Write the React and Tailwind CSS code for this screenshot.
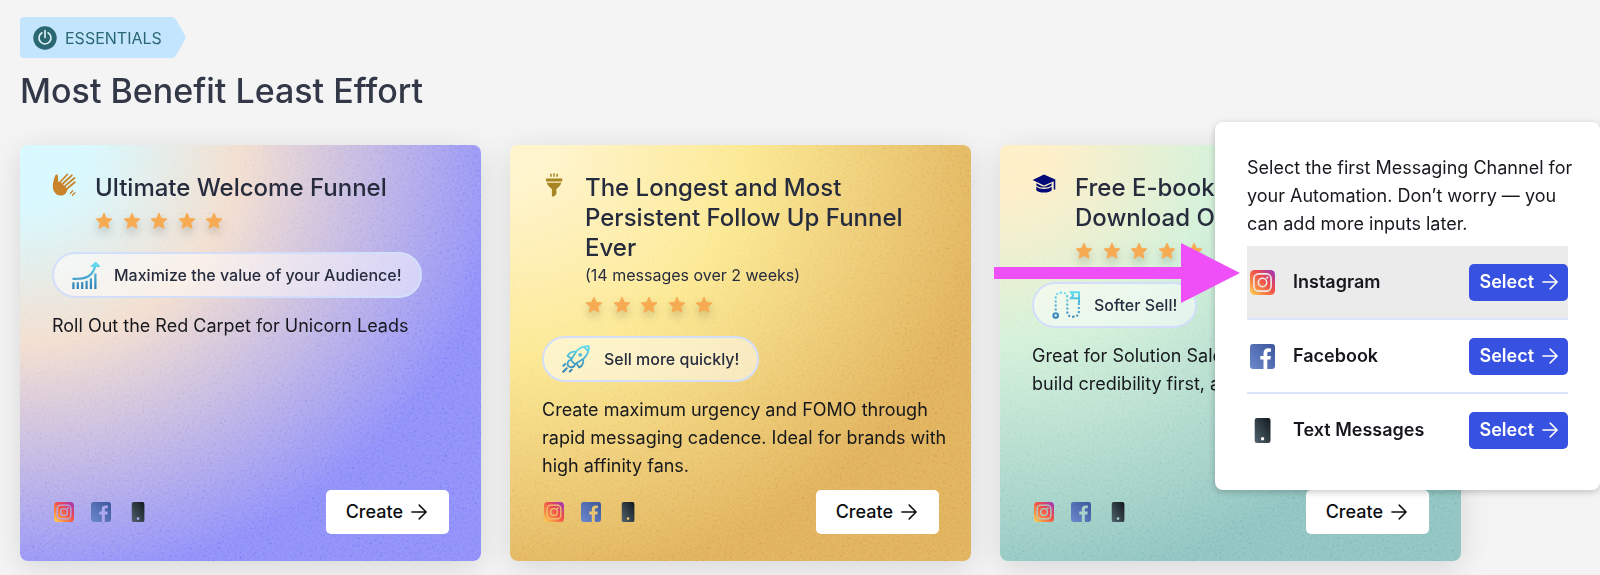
import { useId } from 'react';

function ArrowIcon({ className }) {
  return (
    <svg viewBox="0 0 16 16" fill="none" stroke="currentColor" strokeWidth="1.5" strokeLinecap="round" strokeLinejoin="round" className={className} aria-hidden="true">
      <path d="M0.9 8H15M8.2 1.1L15.1 8L8.2 14.9" />
    </svg>
  );
}

function PowerIcon() {
  return (
    <svg viewBox="0 0 24 24" className="size-6" aria-hidden="true">
      <circle cx="12" cy="12" r="11.7" fill="#2b6770" />
      <path d="M9 6.8a6 6 0 1 0 6 0M12 4.6v7" fill="none" stroke="#e3f5fb" strokeWidth="1.6" strokeLinecap="round" />
    </svg>
  );
}

function WaveIcon() {
  return (
    <svg viewBox="0 0 24 24" className="size-6" aria-hidden="true" fill="none" stroke="#c9832a" strokeLinecap="round">
      <path d="M0.8 13.6C0.6 9.5 2.4 5 3.4 2.3C4.1 0.9 6 1.4 5.9 3L6.3 8.8L9.5 10L15.5 16C15 19.6 12.8 22.8 8.5 22.6C4 22.5 1 18.6 0.8 13.6Z" fill="#c9832a" stroke="none" />
      <path d="M7.2 10L15.3 1.5M9.4 12L19.8 2.3M11.5 14.4L22.5 5M13.7 16.8L22.8 9.3" strokeWidth="1.8" />
      <path d="M18.4 20.3L20.7 17.8M20.4 22.3L23 19.6" strokeWidth="1.3" />
    </svg>
  );
}

function FunnelIcon() {
  return (
    <svg viewBox="0 0 24 24" className="size-6" aria-hidden="true" fill="#a88423">
      <path d="M8.2 0.8h1.5v3h-1.5zM11.3 0.3h1.5v3.5h-1.5zM14.4 0.8h1.5v3h-1.5zM4 5.6h16.2v2.8H4zM4.8 9.8h14.6c-0.7 2.6-2.6 4.3-5 6.2v5.2l-2.7 2.3H9.9V16C7.3 14.1 5.4 12.3 4.8 9.8z" />
    </svg>
  );
}

function CapIcon() {
  return (
    <svg viewBox="0 0 24 24" className="size-6" aria-hidden="true" fill="#030a78">
      <path d="M12 1.4L23.3 6.4V16.5H21.7V8.3L12 12.5L0.6 7Z" />
      <path d="M4.3 10.2L9.7 12.9Q12 14 14.3 12.9L19.7 10.2V12.2Q17.8 14.5 12 14.6Q6.2 14.5 4.3 12.2ZM4.3 13.8Q7 16 12 16T19.7 13.8V17.2Q17.7 19.5 12 19.5T4.3 17.2Z" />
    </svg>
  );
}

function Star() {
  return (
    <svg viewBox="0 0 18 18" className="size-[18px]" aria-hidden="true">
      <path d="M9 1.1L11.35 6.3L17 6.95L12.8 10.8L13.95 16.4L9 13.6L4.05 16.4L5.2 10.8L1 6.95L6.65 6.3Z" fill="#f6aa52" stroke="#f6aa52" strokeWidth="0.9" strokeLinejoin="round" />
    </svg>
  );
}

function BlueFade({ id }) {
  return (
    <linearGradient id={id} gradientUnits="userSpaceOnUse" x1="0" y1="0" x2="0" y2="28">
      <stop offset="0" stopColor="#62e0f2" />
      <stop offset="1" stopColor="#2f7cb4" />
    </linearGradient>
  );
}

function GrowthIcon() {
  const id = useId();
  return (
    <svg viewBox="0 0 28 28" className="size-7" aria-hidden="true" fill="none" stroke={`url(#${id})`}>
      <defs><BlueFade id={id} /></defs>
      <path d="M0.5 17.9L7 17.7C14 17.5 21.5 15 23.7 3" strokeWidth="2.1" />
      <path d="M19.6 5.2L23.8 1.4L27.5 5.4Z" fill="#62e0f2" strokeWidth="1.2" />
      <path d="M1.4 28V21.3M5.8 28V21.3M10.2 28V21M14.6 28V19.7M18.9 28V17.3M23.4 28V12.5" strokeWidth="2.2" />
    </svg>
  );
}

function RocketIcon() {
  const id = useId();
  return (
    <svg viewBox="0 0 28 28" className="size-7" aria-hidden="true" fill="none" stroke={`url(#${id})`} strokeWidth="1.8" strokeLinejoin="round" strokeLinecap="round">
      <defs><BlueFade id={id} /></defs>
      <path d="M26.9 1.1C21.5 1 17.5 2.8 14.5 6L8.8 15.2L12.8 19.2L21.8 13.5C25.3 10.3 27 6.5 26.9 1.1Z" />
      <path d="M22 1.9L26.1 6M14 6.8C9.5 6 7.2 7.9 5.5 11L9.6 13.5M21.1 14.1C22 18.5 20.4 20.7 17.2 22.5L14.5 18.6M8.8 15.2C6.5 14.9 5.3 17 5.7 20.4L8 22.1C11 22.4 13 21.5 12.8 19.2" />
      <circle cx="18.2" cy="9.8" r="1" />
      <path d="M3.3 18.9L1.4 20.8M4.7 23.3L1.3 26.7M9.7 24.6L7.8 26.5" strokeWidth="2" />
    </svg>
  );
}

function RouteIcon() {
  const id = useId();
  return (
    <svg viewBox="0 0 28 28" className="size-7" aria-hidden="true" fill="none" stroke={`url(#${id})`}>
      <defs><BlueFade id={id} /></defs>
      <circle cx="3.7" cy="24.5" r="2.3" strokeWidth="2" />
      <path d="M3.7 19.5V6.5Q3.7 1.5 9.5 1.5Q15.3 1.5 15.3 6.5V20.5Q15.3 25.7 21 25.7Q26.8 25.7 26.8 20.5V12" strokeWidth="2" strokeDasharray="2 2" />
      <path d="M27 12V1.3H19L21.3 4.3L19 7.3H27" strokeWidth="2" />
    </svg>
  );
}

function InstagramIcon({ className }) {
  const id = useId();
  return (
    <svg viewBox="0 0 25 25" className={className} role="img" aria-label="Instagram">
      <defs>
        <linearGradient id={`${id}a`} x1="0" y1="1" x2="1" y2="0">
          <stop offset="0" stopColor="#fddb55" />
          <stop offset="0.28" stopColor="#fb8a45" />
          <stop offset="0.6" stopColor="#ee4a4c" />
          <stop offset="1" stopColor="#9a35c4" />
        </linearGradient>
        <mask id={`${id}b`}>
          <rect width="25" height="25" rx="4.5" fill="white" />
          <rect x="3.9" y="3.9" width="17.2" height="17.2" rx="4.8" fill="none" stroke="black" strokeWidth="1.6" />
          <circle cx="12.5" cy="12.5" r="4.2" fill="none" stroke="black" strokeWidth="1.6" />
          <circle cx="17.3" cy="7.7" r="1.1" fill="black" />
        </mask>
      </defs>
      <rect width="25" height="25" fill={`url(#${id}a)`} mask={`url(#${id}b)`} />
    </svg>
  );
}

function FacebookIcon({ className }) {
  const id = useId();
  return (
    <svg viewBox="0 0 25 25" className={className} role="img" aria-label="Facebook">
      <defs>
        <linearGradient id={id} x1="0" y1="1" x2="1" y2="0">
          <stop offset="0" stopColor="#6d8ace" />
          <stop offset="1" stopColor="#3c559c" />
        </linearGradient>
      </defs>
      <path d="M3 0H22A3 3 0 0 1 25 3V22A3 3 0 0 1 22 25H17.3V15.6H20.4L20.9 11.9H17.3V9.7C17.3 8.5 17.7 7.8 19.3 7.8H21V4.5Q19.8 4.3 18.4 4.3C15.4 4.3 13.5 6.1 13.5 9.3V11.9H10.3V15.6H13.5V25H3A3 3 0 0 1 0 22V3A3 3 0 0 1 3 0Z" fill={`url(#${id})`} />
    </svg>
  );
}

function PhoneIcon({ className }) {
  const id = useId();
  return (
    <svg viewBox="0 0 25 25" className={className} role="img" aria-label="Text Messages">
      <defs>
        <linearGradient id={id} x1="0" y1="1" x2="1" y2="0">
          <stop offset="0" stopColor="#52646f" />
          <stop offset="1" stopColor="#11181c" />
        </linearGradient>
      </defs>
      <path fillRule="evenodd" d="M7 0H18.2A2.3 2.3 0 0 1 20.5 2.3V22.7A2.3 2.3 0 0 1 18.2 25H7A2.3 2.3 0 0 1 4.7 22.7V2.3A2.3 2.3 0 0 1 7 0ZM12.6 19A1.7 1.7 0 1 0 12.6 22.4A1.7 1.7 0 1 0 12.6 19Z" fill={`url(#${id})`} />
    </svg>
  );
}

function Grain() {
  const id = useId();
  return (
    <svg className="pointer-events-none absolute inset-0 size-full opacity-25 mix-blend-soft-light" aria-hidden="true">
      <filter id={id} x="0" y="0" width="100%" height="100%">
        <feTurbulence type="fractalNoise" baseFrequency="0.4" numOctaves="2" />
        <feColorMatrix values="1.2 0 0 0 -0.25  1.2 0 0 0 -0.25  1.2 0 0 0 -0.25  0 0 0 0 1" />
      </filter>
      <rect width="100%" height="100%" filter={`url(#${id})`} />
    </svg>
  );
}

const cards = [
  {
    title: 'Ultimate Welcome Funnel',
    icon: WaveIcon,
    badge: 'Maximize the value of your Audience!',
    badgeIcon: GrowthIcon,
    text: 'Roll Out the Red Carpet for Unicorn Leads',
    bg: 'bg-[radial-gradient(106%_106%_at_0_0,#d8f9ff_14%,#f3dfd0_45%,#9191fa_100%)]',
  },
  {
    title: 'The Longest and Most Persistent Follow Up Funnel Ever',
    note: '(14 messages over 2 weeks)',
    icon: FunnelIcon,
    badge: 'Sell more quickly!',
    badgeIcon: RocketIcon,
    text: 'Create maximum urgency and FOMO through rapid messaging cadence. Ideal for brands with high affinity fans.',
    bg: 'bg-[radial-gradient(106%_106%_at_0_0,#fff4cb_10%,#fce994_48%,#e1b35d_100%)]',
  },
  {
    title: 'Free E-book/\nDownload Of',
    icon: CapIcon,
    badge: 'Softer Sell!',
    badgeIcon: RouteIcon,
    text: 'Great for Solution Sales\nbuild credibility first, and',
    bg: 'bg-[radial-gradient(106%_106%_at_0_0,#ffefc8_10%,#d4f1da_45%,#91c5c2_100%)]',
  },
];

const channels = [
  { name: 'Instagram', icon: InstagramIcon, active: true },
  { name: 'Facebook', icon: FacebookIcon },
  { name: 'Text Messages', icon: PhoneIcon },
];

function FunnelCard({ card }) {
  const Icon = card.icon;
  const BadgeIcon = card.badgeIcon;
  return (
    <article className={`relative flex min-h-[416px] flex-col overflow-hidden rounded-lg px-8 pt-7 pb-[27px] ${card.bg}`}>
      <Grain />
      <div className="relative flex gap-[19px]">
        <Icon />
        <div className="flex-1">
          <h2 className="text-2xl/[30px] font-medium whitespace-pre-line text-[#262c3d]">{card.title}</h2>
          {card.note && <p className="text-base/6 text-[#262c3d]">{card.note}</p>}
          <div className="flex h-9 w-[128px] items-center justify-between drop-shadow-[0_5px_5px_rgba(0,0,0,0.18)]" role="img" aria-label="5 stars">
            {[1, 2, 3, 4, 5].map(n => <Star key={n} />)}
          </div>
        </div>
      </div>
      <div className="relative mt-[13px] flex h-[46px] items-center gap-3.5 self-start rounded-full border-2 border-[#d3dffa] bg-white/50 px-[18px] text-base font-medium text-[#262c3d]">
        <BadgeIcon />
        {card.badge}
      </div>
      <p className="relative mt-3.5 -mr-3 text-lg/7 whitespace-pre-line text-[#16181d]">{card.text}</p>
      <div className="relative mt-auto flex items-center justify-between">
        <div className="flex gap-[17px] pl-0.5">
          <InstagramIcon className="size-5" />
          <FacebookIcon className="size-5" />
          <PhoneIcon className="size-5" />
        </div>
        <button type="button" className="flex h-11 items-center gap-2 rounded-[5px] bg-white pr-[22px] pl-5 text-lg font-medium text-[#0b0d10]">
          Create
          <ArrowIcon className="size-4" />
        </button>
      </div>
    </article>
  );
}

function ChannelPopup() {
  return (
    <div className="absolute top-[122px] right-0 w-[385px] rounded-lg bg-white px-8 pt-8 pb-[22px] shadow-[0_2px_7px_rgba(0,0,0,0.22)]">
      <p className="-mr-3 text-lg/7 text-[#16181d]">
        Select the first Messaging Channel for your Automation. Don’t worry — you can add more inputs later.
      </p>
      <ul className="mt-2">
        {channels.map(({ name, icon: Icon, active }) => (
          <li
            key={name}
            className={`flex h-[74px] items-center border-b-2 border-[#dbe4fa] pl-[3px] last:border-transparent ${active ? 'bg-[#ebebeb]' : ''}`}
          >
            <Icon className="size-[25px]" />
            <span className="ml-[18px] flex-1 text-lg font-semibold text-[#16181d]">{name}</span>
            <button type="button" className="flex h-[37px] items-center gap-2 rounded-[5px] bg-[#3751e1] px-2.5 text-lg font-semibold text-white">
              Select
              <ArrowIcon className="size-4" />
            </button>
          </li>
        ))}
      </ul>
      <svg viewBox="0 0 246 60" className="pointer-events-none absolute top-[121px] -left-[221px] h-[60px] w-[246px]" aria-hidden="true">
        <path d="M0 24H187V0L246 30L187 60V36H0Z" fill="#ee4ff6" />
      </svg>
    </div>
  );
}

export default function App() {
  return (
    <main className="relative min-h-screen overflow-hidden bg-[#f4f4f4] pt-[17px] pb-3.5 pl-5 font-['Inter',sans-serif]">
      <div className="flex h-[41px]">
        <div className="flex items-center gap-2 rounded-l bg-[#c3e5fe] pr-2.5 pl-[13px] text-base text-[#2b6770]">
          <PowerIcon />
          ESSENTIALS
        </div>
        <svg viewBox="0 0 14 41" className="h-full w-3.5" aria-hidden="true">
          <path d="M0 0Q2.5 0 4 2.5L13 18.5Q14 20.5 13 22.5L4 38.5Q2.5 41 0 41Z" fill="#c3e5fe" />
        </svg>
      </div>
      <h1 className="mt-3 text-[34px]/[42px] font-medium text-[#333848]">Most Benefit Least Effort</h1>
      <div className="mt-[33px] grid grid-cols-3 gap-[29px] pr-[139px]">
        {cards.map(card => (
          <div key={card.title} className="grid rounded-lg shadow-[0_6px_30px_rgba(0,0,0,0.12)]">
            <FunnelCard card={card} />
          </div>
        ))}
      </div>
      <ChannelPopup />
    </main>
  );
}
